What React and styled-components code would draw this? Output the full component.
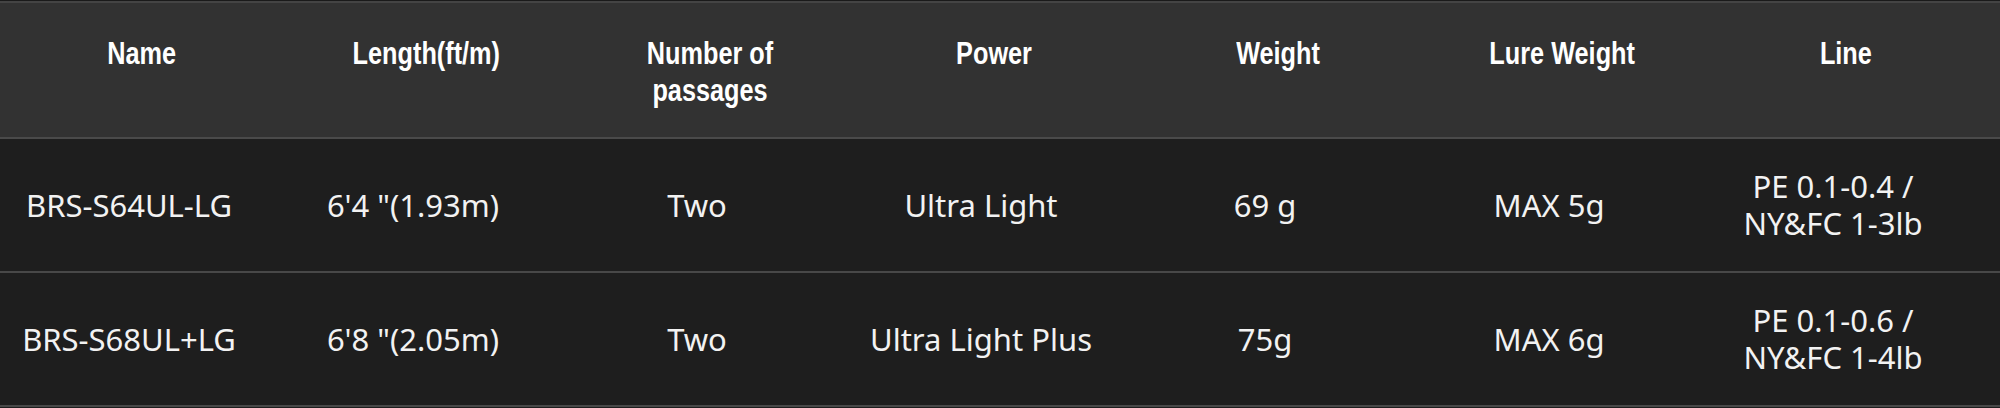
import styled, { createGlobalStyle } from "styled-components";

const GlobalStyle = createGlobalStyle`
  body {
    margin: 0;
    background: #1e1e1e;
  }
`;

const Table = styled.div`
  width: 100%;
  border-top: 1px solid #1a1a1a;
  background: #1e1e1e;
`;

const HeadRow = styled.div`
  display: grid;
  grid-template-columns: repeat(7, 284px);
  height: 134px;
  background: #323232;
  border-top: 2px solid #444;
  border-bottom: 2px solid #4a4a4a;
`;

const HeadCell = styled.div`
  padding-top: 32px;
  text-align: center;
`;

// condensed bold label, the original uses a narrow display face
const HeadLabel = styled.span`
  display: inline-block;
  transform: scaleX(0.79);
  color: #fff;
  font-family: "Liberation Sans", Arial, sans-serif;
  font-weight: 700;
  font-size: 32px;
  line-height: 37px;
  white-space: nowrap;
`;

const Row = styled.div`
  display: grid;
  grid-template-columns: repeat(7, 284px);
  height: 132px;
  background: #1e1e1e;
  border-bottom: 2px solid #484848;
`;

const Cell = styled.div`
  display: flex;
  flex-direction: column;
  align-items: center;
  justify-content: center;
  padding-right: 26px;
  text-align: center;
  color: #f2f2f2;
  font-family: "Noto Sans", sans-serif;
  font-size: 31px;
  line-height: 37px;
`;

const columns = [
  ["Name"],
  ["Length(ft/m)"],
  ["Number of", "passages"],
  ["Power"],
  ["Weight"],
  ["Lure Weight"],
  ["Line"],
];

const rods = [
  {
    name: "BRS-S64UL-LG",
    length: "6'4 \"(1.93m)",
    passages: "Two",
    power: "Ultra Light",
    weight: "69 g",
    lure: "MAX 5g",
    line: ["PE 0.1-0.4 /", "NY&FC 1-3lb"],
  },
  {
    name: "BRS-S68UL+LG",
    length: "6'8 \"(2.05m)",
    passages: "Two",
    power: "Ultra Light Plus",
    weight: "75g",
    lure: "MAX 6g",
    line: ["PE 0.1-0.6 /", "NY&FC 1-4lb"],
  },
];

export default function App() {
  return (
    <>
      <GlobalStyle />
      <Table>
        <HeadRow>
          {columns.map((c, i) => (
            <HeadCell key={i}>
              <HeadLabel>
                {c[0]}
                {c[1] && <><br />{c[1]}</>}
              </HeadLabel>
            </HeadCell>
          ))}
        </HeadRow>
        {rods.map((r) => (
          <Row key={r.name}>
            <Cell>{r.name}</Cell>
            <Cell>{r.length}</Cell>
            <Cell>{r.passages}</Cell>
            <Cell>{r.power}</Cell>
            <Cell>{r.weight}</Cell>
            <Cell>{r.lure}</Cell>
            <Cell>
              {r.line[0]}
              <br />
              {r.line[1]}
            </Cell>
          </Row>
        ))}
      </Table>
    </>
  );
}
